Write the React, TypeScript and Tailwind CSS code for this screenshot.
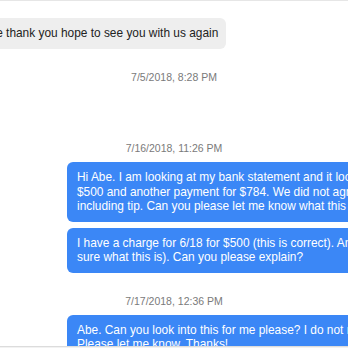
export default function App() {
  const stamp = "text-center text-[10.5px] leading-[14px] text-[#7a7a7a]";
  const blue =
    "ml-[67px] w-[420px] rounded-[6px] bg-[#3b87f6] px-[10px] py-[8px] text-[11.9px] leading-[14.5px] text-white whitespace-nowrap";

  return (
    <div className="flex h-screen w-full flex-col overflow-hidden bg-white font-['Liberation_Sans',Arial,sans-serif]">
      <div className="h-px shrink-0 bg-[#e6e6e6]" />

      {/* incoming */}
      <div className="mt-[17px] flex">
        <div className="-ml-[98px] rounded-[6px] bg-[#eeeeee] py-[8px] pl-[10px] pr-[8px] text-[11.9px] leading-[15px] text-[#222] whitespace-nowrap">
          You are welcome thank you hope to see you with us again
        </div>
      </div>

      <div className={`${stamp} mt-[21px]`}>7/5/2018, 8:28 PM</div>

      <div className={`${stamp} mt-[57px]`}>7/16/2018, 11:26 PM</div>

      <div className={`${blue} mt-[7px]`}>
        Hi Abe. I am looking at my bank statement and it looks like there was a charge for
        <br />
        $500 and another payment for $784. We did not agree to this amount
        <br />
        including tip. Can you please let me know what this is for?
      </div>

      <div className={`${blue} mt-[6px]`}>
        I have a charge for 6/18 for $500 (this is correct). And another for $784 (not
        <br />
        sure what this is). Can you please explain?
      </div>

      <div className={`${stamp} mt-[21px]`}>7/17/2018, 12:36 PM</div>

      <div className={`${blue} mt-[7px] shrink-0`}>
        Abe. Can you look into this for me please? I do not recognize the charge.
        <br />
        Please let me know. Thanks!
      </div>

      <div className="fixed bottom-0 left-0 h-[2px] w-full border-t border-[#dcdcdc] bg-[#f2f2f2]" />
    </div>
  );
}
